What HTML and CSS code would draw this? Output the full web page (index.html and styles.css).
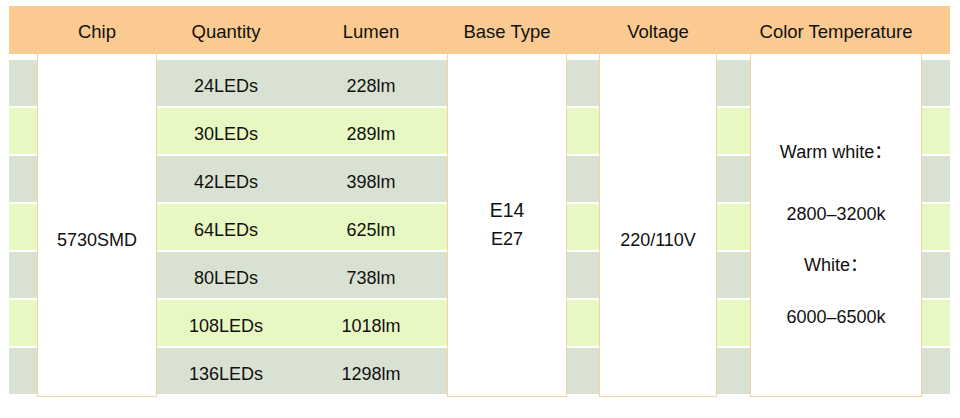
FILE: index.html
```html
<!DOCTYPE html>
<html>
<head>
<meta charset="utf-8">
<link rel="stylesheet" href="styles.css">
</head>
<body>
<div class="spec">
  <div class="head">
    <div class="h c-chip">Chip</div>
    <div class="h c-qty">Quantity</div>
    <div class="h c-lum">Lumen</div>
    <div class="h c-base">Base Type</div>
    <div class="h c-volt">Voltage</div>
    <div class="h c-temp">Color Temperature</div>
  </div>
  <div class="body">
    <div class="stripes">
      <div class="row gray"><div class="cell c-qty">24LEDs</div><div class="cell c-lum">228lm</div></div>
      <div class="row green"><div class="cell c-qty">30LEDs</div><div class="cell c-lum">289lm</div></div>
      <div class="row gray"><div class="cell c-qty">42LEDs</div><div class="cell c-lum">398lm</div></div>
      <div class="row green"><div class="cell c-qty">64LEDs</div><div class="cell c-lum">625lm</div></div>
      <div class="row gray"><div class="cell c-qty">80LEDs</div><div class="cell c-lum">738lm</div></div>
      <div class="row green"><div class="cell c-qty">108LEDs</div><div class="cell c-lum">1018lm</div></div>
      <div class="row gray"><div class="cell c-qty">136LEDs</div><div class="cell c-lum">1298lm</div></div>
    </div>
    <div class="panel c-chip low">5730SMD</div>
    <div class="panel c-base stack">
      <div class="big">E14</div>
      <div class="small">E27</div>
    </div>
    <div class="panel c-volt low">220/110V</div>
    <div class="panel c-temp temps">
      <div class="t t1">Warm white：</div>
      <div class="t t2">2800–3200k</div>
      <div class="t t3">White：</div>
      <div class="t t4">6000–6500k</div>
    </div>
  </div>
</div>
</body>
</html>
```

FILE: styles.css
```css
:root {
  --cols: 28px 120px 138px 152px 120px 32px 118px 33px 172px 28px;
}

html, body {
  margin: 0;
  padding: 0;
  background: #ffffff;
}

body {
  font-family: "Liberation Sans", Arial, "Noto Sans CJK SC", sans-serif;
  color: #111111;
}

.spec {
  width: 941px;
  margin: 6px 0 0 9px;
}

.head {
  display: grid;
  grid-template-columns: var(--cols);
  height: 48px;
  background: #fbca90;
  align-items: center;
}

.h {
  font-size: 18.5px;
  text-align: center;
  white-space: nowrap;
  padding-top: 4px;
}

.c-chip { grid-column: 2; }
.c-qty { grid-column: 3; }
.c-lum { grid-column: 4; }
.c-base { grid-column: 5; }
.c-volt { grid-column: 7; }
.c-temp { grid-column: 9; }

.body {
  display: grid;
  grid-template-columns: var(--cols);
  grid-template-rows: 6px 336px 1px;
}

.stripes {
  grid-column: 1 / -1;
  grid-row: 2;
  display: flex;
  flex-direction: column;
}

.row {
  display: grid;
  grid-template-columns: var(--cols);
  height: 46px;
  margin-bottom: 2px;
  align-items: center;
}

.gray { background: #d9e2d2; }
.green { background: #e8f8c2; }

.cell {
  font-size: 18px;
  text-align: center;
  padding-top: 6px;
}

.panel {
  grid-row: 1 / -1;
  background: #ffffff;
  border: 1px solid #f2d3a4;
  border-top: none;
  display: flex;
  align-items: center;
  justify-content: center;
  font-size: 18px;
}

.low {
  padding-top: 31px;
}

.stack {
  flex-direction: column;
}

.big {
  font-size: 19.5px;
  line-height: 29px;
}

.small {
  font-size: 18px;
  line-height: 29px;
}

.temps {
  flex-direction: column;
  justify-content: flex-start;
  padding-top: 88px;
}

.t {
  line-height: 20px;
  height: 20px;
  white-space: nowrap;
}

.t2 { margin-top: 42px; }
.t3 { margin-top: 31px; }
.t4 { margin-top: 32px; }
```
